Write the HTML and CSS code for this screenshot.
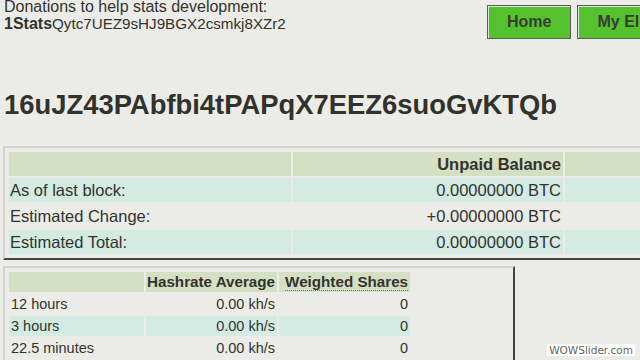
FILE: index.html
```html
<!DOCTYPE html>
<html lang="en">
<head>
    <meta charset="UTF-8">
    <title>Eligius Pool Stats</title>
    <link rel="stylesheet" href="styles.css">
</head>
<body>
    <div class="page">
        <div class="top">
            <div class="donate">
                Donations to help stats development:<br>
                <span class="donate-addr"><b>1Stats</b>Qytc7UEZ9sHJ9BGX2csmkj8XZr2</span>
            </div>
            <div class="nav">
                <a class="nav-btn" href="#">Home</a>
                <a class="nav-btn" href="#">My Eligius</a>
            </div>
        </div>

        <h1 class="address">16uJZ43PAbfbi4tPAPqX7EEZ6suoGvKTQb</h1>

        <div class="box box-balance">
            <table class="stats balance">
                <colgroup>
                    <col class="col-label">
                    <col class="col-value">
                    <col class="col-extra">
                </colgroup>
                <tr>
                    <th></th>
                    <th>Unpaid Balance</th>
                    <th></th>
                </tr>
                <tr class="shade">
                    <td class="label">As of last block:</td>
                    <td>0.00000000 BTC</td>
                    <td></td>
                </tr>
                <tr>
                    <td class="label">Estimated Change:</td>
                    <td>+0.00000000 BTC</td>
                    <td></td>
                </tr>
                <tr class="shade">
                    <td class="label">Estimated Total:</td>
                    <td>0.00000000 BTC</td>
                    <td></td>
                </tr>
            </table>
        </div>

        <div class="box box-hash">
            <table class="stats hashrate">
                <colgroup>
                    <col class="col-period">
                    <col class="col-rate">
                    <col class="col-shares">
                </colgroup>
                <tr>
                    <th></th>
                    <th>Hashrate Average</th>
                    <th><abbr title="Shares weighted by difficulty">Weighted Shares</abbr></th>
                </tr>
                <tr>
                    <td class="label">12 hours</td>
                    <td>0.00 kh/s</td>
                    <td>0</td>
                </tr>
                <tr class="shade">
                    <td class="label">3 hours</td>
                    <td>0.00 kh/s</td>
                    <td>0</td>
                </tr>
                <tr>
                    <td class="label">22.5 minutes</td>
                    <td>0.00 kh/s</td>
                    <td>0</td>
                </tr>
            </table>
        </div>
    </div>

    <div class="watermark">WOWSlider.com</div>
</body>
</html>
```

FILE: styles.css
```css
html, body {
    overflow: hidden;
}
body {
    margin: 0;
    background-color: #ebece7;
    font-family: 'Liberation Sans', Arial, sans-serif;
    color: #33332d;
}
.page {
    width: 800px;
}
.top {
    display: flex;
    height: 39px;
}
.donate {
    width: 483px;
    padding-left: 4px;
    margin-top: -2px;
    font-size: 16px;
    line-height: 17px;
}
.donate-addr {
    font-size: 15.2px;
}
.donate-addr b {
    font-size: 16px;
}
.nav {
    display: flex;
    gap: 6px;
    padding-top: 5px;
}
.nav-btn {
    display: block;
    height: 32px;
    line-height: 32px;
    padding: 0 19px;
    background-color: #54c22c;
    border: 1px solid #5a5a5a;
    box-shadow: inset 1px 1px 0 #e2e2e2;
    color: #3b3b35;
    font-size: 16px;
    font-weight: bold;
    text-decoration: none;
    white-space: nowrap;
}
.address {
    margin: 50px 0 0 4px;
    font-size: 27.4px;
    line-height: 31px;
    font-weight: bold;
    color: #32322c;
}
.box {
    box-sizing: border-box;
    margin-left: 3px;
    padding: 2px;
    border: 2px solid;
    border-color: #d2d3ce #444 #444 #d2d3ce;
}
.box-balance {
    margin-top: 26px;
    width: 790px;
}
.box-hash {
    margin-top: 6px;
    width: 512px;
}
.stats {
    border-collapse: separate;
    border-spacing: 2px;
    table-layout: fixed;
}
.stats th,
.stats td {
    padding: 0 2px 0 1px;
    text-align: right;
    white-space: nowrap;
    overflow: hidden;
}
.stats th {
    background-color: #d5dfc4;
    font-weight: bold;
}
.stats td.label {
    text-align: left;
}
.stats .shade td {
    background-color: #d3ebe3;
}
.balance th,
.balance td {
    height: 24px;
    font-size: 16.5px;
    line-height: 24px;
}
.col-label { width: 282px; }
.col-value { width: 270px; }
.col-extra { width: 200px; }
.hashrate th,
.hashrate td {
    height: 20px;
    font-size: 14.5px;
    line-height: 20px;
}
.hashrate th {
    font-size: 15.2px;
}
.hashrate td.label {
    padding-left: 2px;
}
.col-period { width: 135px; }
.col-rate { width: 131px; }
.col-shares { width: 131px; }
.hashrate abbr {
    text-decoration: none;
    border-bottom: 1px dotted #777;
}
.watermark {
    position: absolute;
    right: 5px;
    bottom: 4px;
    padding: 0 2px;
    background-color: #fff;
    color: #666;
    font-family: 'DejaVu Sans', sans-serif;
    font-size: 10.5px;
    line-height: 12px;
}
```
